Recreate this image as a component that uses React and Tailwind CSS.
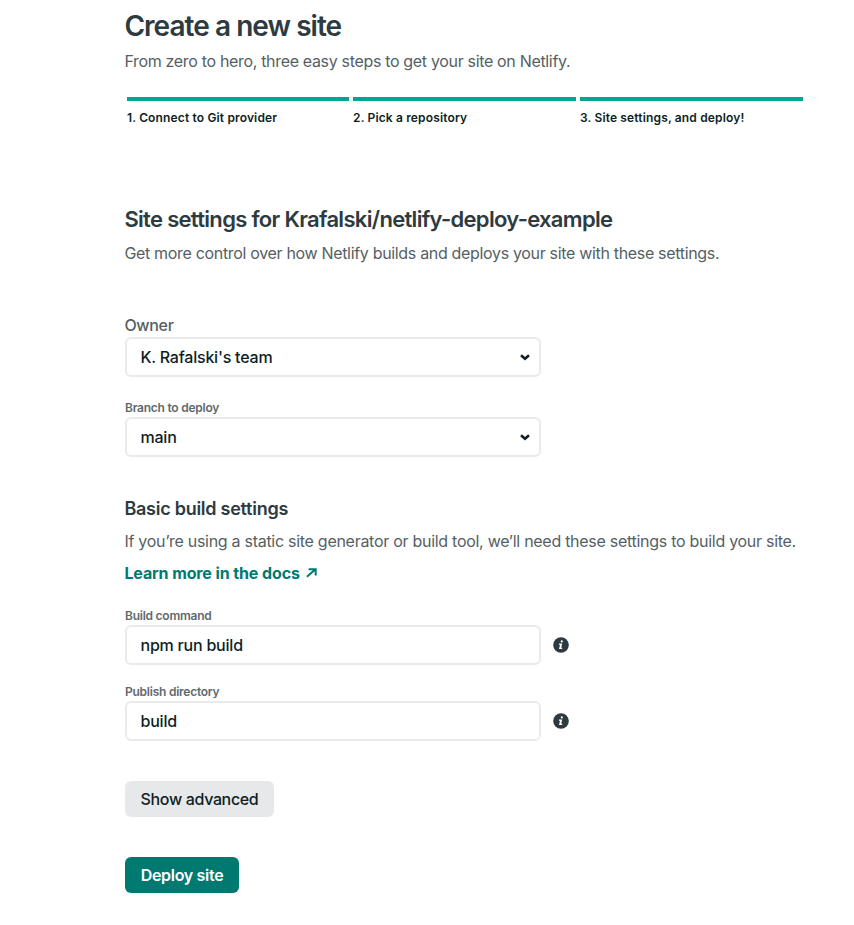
function Label({ children }) {
  return <label className="block h-[17px] text-[12px] leading-4 font-semibold tracking-[-0.24px] text-[#5f696e]">{children}</label>;
}

function Field({ children, select }) {
  return (
    <div className="flex h-10 w-[416px] items-center justify-between rounded-md border-2 border-[#e9ebeb] pr-[9px] pl-[13.5px] text-[16px] font-medium tracking-[-0.22px] text-[#0e1e25]">
      <span>{children}</span>
      {select && (
        <svg width="10" height="7" viewBox="0 0 10 7" fill="none" stroke="#0e1e25" strokeWidth="2.5">
          <path d="M1 1.2 5 4.8 9 1.2" />
        </svg>
      )}
    </div>
  );
}

function Info() {
  return (
    <svg className="ml-3" width="16" height="16" viewBox="0 0 16 16">
      <circle cx="8" cy="8" r="7.8" fill="#2d3b41" />
      <circle cx="8.8" cy="4.4" r="1.1" fill="#fff" />
      <path d="M6 6.5h3.2l-1 4.3h1.2l-.3 1.2H6l1-4.3H5.8z" fill="#fff" />
    </svg>
  );
}

export default function App() {
  return (
    <main className="flex h-[925px] flex-col items-start bg-white pl-[125px] font-['Inter',sans-serif] whitespace-nowrap text-[#555f64]">
      <h1 className="-ml-[0.6px] mt-[10px] h-8 text-[28px] leading-8 font-semibold tracking-[-0.96px] text-[#2d3b41]">Create a new site</h1>
      <p className="-ml-[0.6px] mt-[7px] h-6 text-[16px] leading-6 tracking-[-0.33px]">From zero to hero, three easy steps to get your site on Netlify.</p>
      <ol className="mt-6 ml-[2px] flex gap-1 text-[12px] leading-4 font-semibold tracking-[0.15px] text-[#0e1e25]">
        <li className="w-[222px] border-t-4 border-[#00a594] pt-[9px]">1. Connect to Git provider</li>
        <li className="w-[223px] border-t-4 border-[#00a594] pt-[9px]">2. Pick a repository</li>
        <li className="w-[223px] border-t-4 border-[#00a594] pt-[9px]">3. Site settings, and deploy!</li>
      </ol>
      <h2 className="-ml-[0.6px] mt-[77px] h-8 text-[22px] leading-8 font-semibold tracking-[-0.69px] text-[#2d3b41]">Site settings for Krafalski/netlify-deploy-example</h2>
      <p className="-ml-[0.6px] mt-[6px] h-6 text-[16px] leading-6 tracking-[-0.325px]">Get more control over how Netlify builds and deploys your site with these settings.</p>
      <label className="-ml-[0.6px] mt-12 h-6 text-[16px] leading-6 font-medium tracking-[-0.33px]">Owner</label>
      <Field select>K. Rafalski's team</Field>
      <div className="mt-[23px]">
        <Label>Branch to deploy</Label>
        <Field select>main</Field>
      </div>
      <h3 className="-ml-[0.6px] mt-10 h-6 text-[18px] leading-6 font-semibold tracking-[-0.26px] text-[#2d3b41]">Basic build settings</h3>
      <p className="-ml-[0.6px] mt-2 h-6 text-[16px] leading-6 tracking-[-0.28px]">If you’re using a static site generator or build tool, we’ll need these settings to build your site.</p>
      <a className="-ml-[0.6px] mt-2 flex h-6 items-center text-[16px] leading-6 font-bold tracking-[-0.11px] text-[#007a70]">
        Learn more in the docs
        <svg className="ml-[6px]" width="11" height="10" viewBox="0 0 11 10" fill="none" stroke="#007a70" strokeWidth="2">
          <path d="M2.6 1.2h7.1v6.4M9.5 1.3.9 8.8" />
        </svg>
      </a>
      <div className="mt-[23px]">
        <Label>Build command</Label>
        <div className="flex items-center">
          <Field>npm run build</Field>
          <Info />
        </div>
      </div>
      <div className="mt-[19px]">
        <Label>Publish directory</Label>
        <div className="flex items-center">
          <Field>build</Field>
          <Info />
        </div>
      </div>
      <button className="mt-10 h-9 w-[149px] rounded-md bg-[#e7e8ea] text-[16px] font-medium tracking-[-0.35px] text-[#0e1e25]">Show advanced</button>
      <button className="mt-10 h-9 w-[114px] rounded-md bg-[#007a70] text-[16px] font-semibold tracking-[-0.3px] text-white">Deploy site</button>
    </main>
  );
}
